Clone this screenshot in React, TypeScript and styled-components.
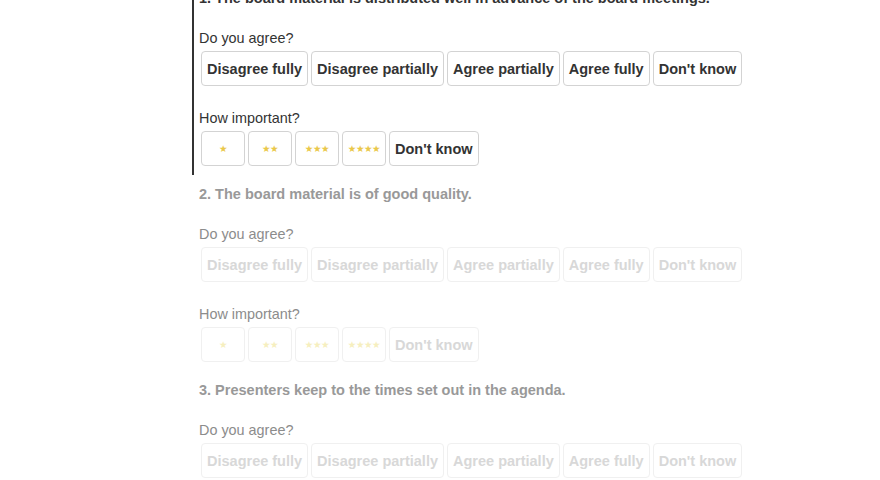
import styled, { createGlobalStyle } from 'styled-components'

const GlobalStyle = createGlobalStyle`
	html, body {
		margin: 0;
		padding: 0;
		background: #ffffff;
		font-family: "Liberation Sans", Arial, Helvetica, sans-serif;
		color: #333333;
		overflow: hidden;
	}
`

const Survey = styled.main`
	margin: -12px 0 0 192px;
	display: flex;
	flex-direction: column;
	gap: 9px;
`

const Question = styled.section<{ $active: boolean }>`
	border-left: 2px solid ${(p) => (p.$active ? '#333333' : 'transparent')};
	padding: 0 0 9px 5px;
	display: flex;
	flex-direction: column;
`

const Title = styled.h2<{ $active: boolean }>`
	margin: 0 0 20px;
	font-size: 14.5px;
	line-height: 20px;
	font-weight: bold;
	color: ${(p) => (p.$active ? '#333333' : '#999999')};
`

const Label = styled.div<{ $active: boolean }>`
	font-size: 14.4px;
	line-height: 20px;
	color: ${(p) => (p.$active ? '#333333' : '#8c8c8c')};
`

const Options = styled.div<{ $last?: boolean }>`
	display: flex;
	gap: 3px;
	margin: 3px 0 ${(p) => (p.$last ? '0' : '22px')} 2px;
`

const Option = styled.button<{ $active: boolean; $star?: boolean }>`
	height: 35px;
	box-sizing: border-box;
	${(p) => (p.$star ? 'width: 44px;' : 'padding: 0 5px;')}
	background: #ffffff;
	border: 1px solid ${(p) => (p.$active ? '#d3d3d3' : '#f0f0f0')};
	border-radius: 4px;
	font-family: "Liberation Sans", Arial, Helvetica, sans-serif;
	font-size: 14.5px;
	font-weight: bold;
	color: ${(p) => (p.$active ? '#333333' : '#d8d8d8')};
	display: flex;
	align-items: center;
	justify-content: center;
	cursor: pointer;
`

const Stars = styled.span<{ $active: boolean }>`
	font-family: "DejaVu Sans", sans-serif;
	font-size: 9.5px;
	letter-spacing: -0.4px;
	color: ${(p) => (p.$active ? '#eac84a' : '#f6efbf')};
`

const AGREE = ['Disagree fully', 'Disagree partially', 'Agree partially', 'Agree fully', "Don't know"]

const QUESTIONS = [
	'1. The board material is distributed well in advance of the board meetings.',
	'2. The board material is of good quality.',
	'3. Presenters keep to the times set out in the agenda.',
]

const QuestionBlock = ({ title, active }: { title: string; active: boolean }) => (
	<Question $active={active}>
		<Title $active={active}>{title}</Title>
		<Label $active={active}>Do you agree?</Label>
		<Options>
			{AGREE.map((a) => (
				<Option key={a} $active={active}>{a}</Option>
			))}
		</Options>
		<Label $active={active}>How important?</Label>
		<Options $last>
			{[1, 2, 3, 4].map((n) => (
				<Option key={n} $active={active} $star>
					<Stars $active={active}>{'★'.repeat(n)}</Stars>
				</Option>
			))}
			<Option $active={active}>Don't know</Option>
		</Options>
	</Question>
)

export default function App() {
	return (
		<>
			<GlobalStyle />
			<Survey>
				{QUESTIONS.map((q, i) => (
					<QuestionBlock key={q} title={q} active={i === 0} />
				))}
			</Survey>
		</>
	)
}
